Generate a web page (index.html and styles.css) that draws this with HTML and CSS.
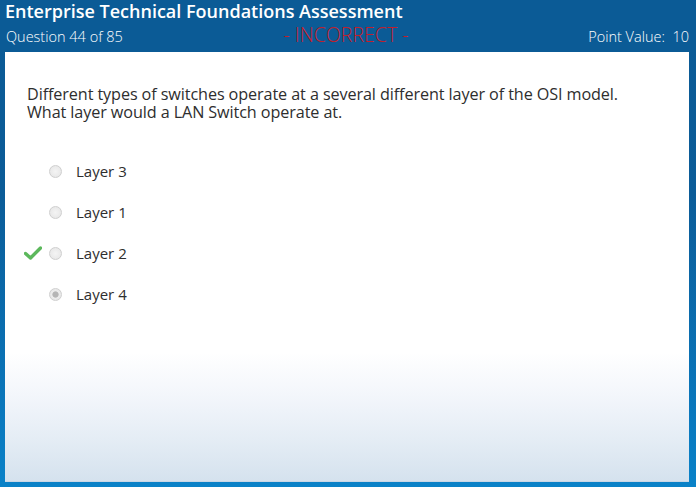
FILE: index.html
```html
<!DOCTYPE html>
<html>
<head>
<meta charset="utf-8">
<link rel="stylesheet" href="styles.css">
</head>
<body>
<div class="frame">
  <header class="header">
    <div class="title">Enterprise Technical Foundations Assessment</div>
    <div class="subbar">
      <span class="qnum">Question 44 of 85</span>
      <span class="status">- INCORRECT -</span>
      <span class="points">Point Value:&nbsp; 10</span>
    </div>
  </header>
  <main class="panel">
    <p class="question">Different types of switches operate at a several different layer of the OSI model.<br>What layer would a LAN Switch operate at.</p>
    <ul class="options">
      <li class="option"><span class="mark"></span><span class="radio"></span><span class="label">Layer 3</span></li>
      <li class="option"><span class="mark"></span><span class="radio"></span><span class="label">Layer 1</span></li>
      <li class="option"><span class="mark"><svg width="18" height="14" viewBox="0 0 18 14"><path d="M1.5 7.5 L6.5 12 L16.5 2" fill="none" stroke="#5cb85c" stroke-width="3.4" stroke-linecap="round" stroke-linejoin="round"/></svg></span><span class="radio"></span><span class="label">Layer 2</span></li>
      <li class="option"><span class="mark"></span><span class="radio checked"></span><span class="label">Layer 4</span></li>
    </ul>
  </main>
</div>
</body>
</html>
```
FILE: styles.css
```css
html, body {
  margin: 0;
  padding: 0;
}
body {
  width: 696px;
  height: 487px;
  overflow: hidden;
  font-family: "Open Sans", "Noto Sans", sans-serif;
}
.frame {
  width: 696px;
  height: 487px;
  box-sizing: border-box;
  padding: 0 7px 5px 5px;
  background: linear-gradient(to bottom, #0b5a95 0%, #0b5c98 40%, #0a78bd 85%, #0a82c8 100%);
  display: flex;
  flex-direction: column;
}
.header {
  height: 52px;
  margin: 0 -7px 0 -5px;
  background: #0b5b96;
  color: #fff;
  display: flex;
  flex-direction: column;
}
.title {
  font-family: "Open Sans", sans-serif;
  font-weight: 600;
  font-size: 18px;
  line-height: 22px;
  padding-left: 5px;
}
.subbar {
  display: grid;
  grid-template-columns: 1fr auto 1fr;
  align-items: baseline;
  padding: 4px 7px 0 6px;
  font-family: "Open Sans", sans-serif;
  font-weight: 300;
  font-size: 14.5px;
  line-height: 18px;
}
.qnum {
  justify-self: start;
}
.points {
  justify-self: end;
}
.status {
  color: #c41e2b;
  font-size: 19.5px;
  line-height: 18px;
  font-weight: 300;
  margin-right: 3px;
}
.panel {
  flex: 1;
  background: linear-gradient(to bottom, #ffffff 0%, #ffffff 70%, #f3f6fb 80%, #e5edf5 90%, #d5e2ee 100%);
  border-bottom: 1px solid #c9d7e6;
  padding: 33px 0 0 22px;
  color: #333;
}
.question {
  margin: 0;
  font-family: "Open Sans", sans-serif;
  font-size: 16.2px;
  line-height: 18px;
  color: #2e2e2e;
  letter-spacing: -0.1px;
}
.options {
  list-style: none;
  margin: 29.5px 0 0 0;
  padding: 0;
}
.option {
  display: flex;
  align-items: center;
  height: 41px;
}
.mark {
  width: 22px;
  margin-left: -3px;
  display: flex;
  align-items: center;
}
.radio {
  width: 11px;
  height: 11px;
  border-radius: 50%;
  border: 1px solid #cfcfcf;
  background: radial-gradient(circle, #f4f4f4 0%, #e4e4e4 100%);
  margin-left: 3px;
  box-sizing: content-box;
}
.radio.checked {
  background: radial-gradient(circle, #b5b5b5 0%, #b5b5b5 35%, #ececec 45%, #e4e4e4 100%);
}
.label {
  margin-left: 14px;
  font-family: "Open Sans", sans-serif;
  font-size: 15px;
  color: #2e2e2e;
}
```
